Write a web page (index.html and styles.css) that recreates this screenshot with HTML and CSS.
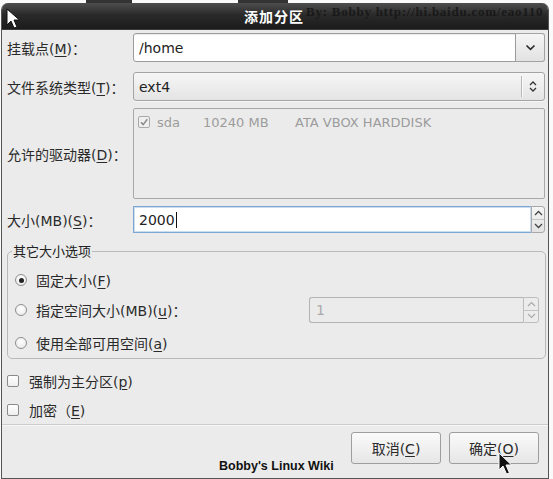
FILE: index.html
```html
<!DOCTYPE html>
<html lang="zh-CN">
<head>
<meta charset="utf-8">
<title>添加分区</title>
<link rel="stylesheet" href="styles.css">
</head>
<body>
<div class="strip"><span class="blot b1"></span><span class="blot b2"></span></div>
<div class="dialog">
  <div class="titlebar">
    <span class="title">添加分区</span>
  </div>
  <div class="content">
    <div class="row r1">
      <span class="lbl">挂载点(<u>M</u>)：</span>
      <div class="field combo-entry">
        <span class="entry">/home</span>
        <span class="drop-btn"><svg width="11" height="7" viewBox="0 0 11 7"><path d="M1.5 1.5 L5.5 5.3 L9.5 1.5" stroke="#2b2b2b" stroke-width="1.7" fill="none"/></svg></span>
      </div>
    </div>
    <div class="row r2">
      <span class="lbl">文件系统类型(<u>T</u>)：</span>
      <div class="field combo-btn">
        <span class="combo-text">ext4</span>
        <span class="vsep"></span>
        <span class="updown"><svg width="8" height="13" viewBox="0 0 8 13"><path d="M1 5 L4 2 L7 5 M1 8 L4 11 L7 8" stroke="#333" stroke-width="1.3" fill="none"/></svg></span>
      </div>
    </div>
    <div class="row r3">
      <span class="lbl">允许的驱动器(<u>D</u>)：</span>
      <div class="field drives">
        <div class="drive">
          <span class="cb checked"><svg width="10" height="10" viewBox="0 0 10 10"><path d="M2 5.2 L4.2 7.6 L8.3 2.2" stroke="#8a8a8a" stroke-width="1.5" fill="none"/></svg></span>
          <span class="d-name">sda</span>
          <span class="d-size">10240 MB</span>
          <span class="d-model">ATA VBOX HARDDISK</span>
        </div>
      </div>
    </div>
    <div class="row r4">
      <span class="lbl">大小(MB)(<u>S</u>)：</span>
      <div class="field spin">
        <span class="spin-entry">2000<span class="caret"></span></span>
        <span class="spin-btns">
          <span class="sb"><svg width="9" height="6" viewBox="0 0 9 6"><path d="M1 5 L4.5 1.5 L8 5" stroke="#444" stroke-width="1.3" fill="none"/></svg></span>
          <span class="sb"><svg width="9" height="6" viewBox="0 0 9 6"><path d="M1 1 L4.5 4.5 L8 1" stroke="#444" stroke-width="1.3" fill="none"/></svg></span>
        </span>
      </div>
    </div>

    <fieldset class="group">
      <legend>其它大小选项</legend>
      <div class="opts">
        <div class="opt">
          <span class="radio on"><span class="dot"></span></span>
          <span class="opt-lbl">固定大小(<u>F</u>)</span>
        </div>
        <div class="opt">
          <span class="radio"></span>
          <span class="opt-lbl">指定空间大小(MB)(<u>u</u>)：</span>
          <div class="spin disabled">
            <span class="spin-entry">1</span>
            <span class="spin-btns">
              <span class="sb"><svg width="9" height="6" viewBox="0 0 9 6"><path d="M1 5 L4.5 1.5 L8 5" stroke="#aaa" stroke-width="1.2" fill="none"/></svg></span>
              <span class="sb"><svg width="9" height="6" viewBox="0 0 9 6"><path d="M1 1 L4.5 4.5 L8 1" stroke="#aaa" stroke-width="1.2" fill="none"/></svg></span>
            </span>
          </div>
        </div>
        <div class="opt last">
          <span class="radio"></span>
          <span class="opt-lbl">使用全部可用空间(<u>a</u>)</span>
        </div>
      </div>
    </fieldset>

    <div class="checks">
      <div class="chk"><span class="cb"></span><span class="chk-lbl">强制为主分区(<u>p</u>)</span></div>
      <div class="chk"><span class="cb"></span><span class="chk-lbl">加密（<u>E</u>)</span></div>
    </div>
    <div class="sep"></div>
    <div class="buttons">
      <button class="btn">取消(<u>C</u>)</button>
      <button class="btn">确定(<u>O</u>)</button>
    </div>
  </div>

  <span class="wm-top">By: Bobby http://hi.baidu.com/eao110</span>
  <span class="wm-bottom">Bobby's Linux Wiki</span>
  <svg class="cursor c1" width="16" height="22" viewBox="0 0 16 22"><path d="M1 1 L1 17 L5 13 L8 20 L11 19 L8 12 L13.5 12 Z" fill="#fff" stroke="#111" stroke-width="1"/></svg>
  <svg class="cursor c2" width="16" height="24" viewBox="0 0 16 24"><path d="M1 1 L1 18 L5 14 L8.5 22 L11.5 21 L8 13 L13.5 13 Z" fill="#111" stroke="#fff" stroke-width="1"/></svg>
</div>
</body>
</html>
```
FILE: styles.css
```css
* { box-sizing: border-box; }
html, body { margin: 0; padding: 0; }
body {
  width: 553px;
  height: 479px;
  overflow: hidden;
  background: #fafafa;
  font-family: "DejaVu Sans", "Noto Sans CJK SC", sans-serif;
  font-size: 14px;
  color: #2a2a2a;
}
u { text-decoration: underline; text-underline-offset: 2px; }

.strip { height: 3px; display: flex; }
.blot { height: 3px; background: #333; }
.b1 { width: 46px; margin-left: 86px; }
.b2 { width: 50px; margin-left: 106px; }

.dialog {
  position: relative;
  width: 548px;
  height: 476px;
  margin-left: 1px;
  background: #ebebeb;
  border: 1px solid #555;
  border-top: none;
  border-radius: 7px 7px 0 0;
  overflow: hidden;
}

.titlebar {
  height: 27px;
  background: linear-gradient(#4e4e4e, #2a2a2a 45%, #1b1b1b);
  display: flex;
  align-items: center;
  justify-content: center;
  padding-left: 4px;
  border-bottom: 1px solid #3a3a3a;
}
.title {
  color: #fff;
  font-family: "Noto Sans CJK SC", sans-serif;
  font-weight: 700;
  font-size: 14px;
  letter-spacing: 1px;
  margin-left: -6px;
}

.content { padding: 3px 3px 0 4px; display: flex; flex-direction: column; }

.row { display: flex; align-items: center; }
.r1 { height: 29px; }
.r2 { height: 29px; margin-top: 10px; }
.r3 { height: 91px; margin-top: 7px; }
.r4 { height: 27px; margin-top: 7px; }

.lbl {
  width: 127px;
  flex: none;
  padding-left: 1px;
  white-space: nowrap;
  color: #2a2a2a;
}
.field { flex: 1; height: 100%; }

.combo-entry { display: flex; }
.entry {
  flex: 1;
  background: #fff;
  border: 1px solid #9c9c9c;
  border-radius: 3px 0 0 3px;
  padding-left: 5px;
  display: flex;
  align-items: center;
  font-size: 14px;
  color: #222;
  box-shadow: inset 0 1px 1px rgba(0,0,0,0.08);
}
.drop-btn {
  width: 30px;
  background: linear-gradient(#f5f5f5, #e2e2e2);
  border: 1px solid #a2a2a2;
  border-left: 1px solid #9c9c9c;
  border-radius: 0 3px 3px 0;
  display: flex;
  align-items: center;
  justify-content: center;
  margin-left: -1px;
}

.combo-btn {
  display: flex;
  align-items: center;
  background: linear-gradient(#f6f6f6, #e4e4e4);
  border: 1px solid #a4a4a4;
  border-radius: 3px;
  box-shadow: 0 1px 0 rgba(255,255,255,0.6);
}
.combo-text { flex: 1; padding-left: 5px; font-size: 14px; color: #222; }
.vsep { width: 1px; height: 21px; background: #b8b8b8; box-shadow: 1px 0 0 #fafafa; }
.updown { width: 22px; display: flex; justify-content: center; }

.drives {
  background: #ebebeb;
  border: 1px solid #a8a8a8;
  border-radius: 2px;
  padding: 6px 0 0 4px;
}
.drive { display: flex; align-items: center; color: #9c9c9c; height: 14px; font-size: 13px; }
.cb {
  width: 12px;
  height: 12px;
  flex: none;
  border: 1px solid #8f8f8f;
  border-radius: 2px;
  background: linear-gradient(#fff, #eee);
  display: inline-flex;
  align-items: center;
  justify-content: center;
}
.cb.checked { border-color: #a9a9a9; background: #efefef; }
.d-name { width: 46px; margin-left: 7px; }
.d-size { width: 92px; }

.spin { display: flex; }
.spin-entry {
  flex: 1;
  background: #fff;
  border: 1px solid #7ea6d2;
  border-right: none;
  padding-left: 5px;
  display: flex;
  align-items: center;
  font-size: 14px;
  color: #222;
  box-shadow: inset 0 0 0 1px #c9dcf0;
}
.caret { width: 1px; height: 16px; background: #111; margin-left: 1px; }
.spin-btns {
  width: 14px;
  display: flex;
  flex-direction: column;
  border: 1px solid #a8a8a8;
  border-radius: 0 3px 3px 0;
  background: linear-gradient(#f5f5f5, #e3e3e3);
}
.sb { flex: 1; display: flex; align-items: center; justify-content: center; }
.sb + .sb { border-top: 1px solid #c4c4c4; }

.group {
  margin: 11px -1px 0 1px;
  padding: 0 0 0 4px;
  border: 1px solid #b9b9b9;
  border-radius: 5px;
  min-width: 0;
}
.group legend {
  padding: 0 1px;
  font-family: "Noto Sans CJK SC", sans-serif;
  font-size: 13px;
  line-height: 14px;
  color: #222;
}
.opts { padding-top: 7px; }
.opt { display: flex; align-items: center; height: 30px; }
.opt.last { margin-top: 3px; }
.radio {
  width: 12px;
  height: 12px;
  margin-left: 3px;
  border: 1px solid #8e8e8e;
  border-radius: 50%;
  background: radial-gradient(circle at 50% 35%, #fff, #e6e6e6);
  display: flex;
  align-items: center;
  justify-content: center;
  flex: none;
}
.dot { width: 5px; height: 5px; border-radius: 50%; background: #222; }
.opt-lbl { margin-left: 9px; flex: 1; color: #2a2a2a; white-space: nowrap; }
.spin.disabled { width: 230px; height: 26px; margin-right: 6px; flex: none; }
.spin.disabled .spin-entry {
  background: #ebebeb;
  border: 1px solid #b3b3b3;
  border-right: none;
  border-radius: 3px 0 0 3px;
  box-shadow: none;
  color: #aaa;
  padding-left: 6px;
}
.spin.disabled .spin-btns { width: 16px; border-color: #bdbdbd; background: #ececec; }

.checks { margin-top: 7px; }
.chk { display: flex; align-items: center; height: 29px; padding-left: 1px; }
.chk .cb { border-color: #8a8a8a; }
.chk-lbl { margin-left: 10px; color: #2a2a2a; }

.sep { height: 1px; background: #cdcdcd; border-bottom: 1px solid #f7f7f7; margin: 0 -3px 0 -4px; box-sizing: content-box; }

.buttons { display: flex; justify-content: flex-end; gap: 8px; margin-top: 6px; padding-right: 6px; }
.btn {
  width: 90px;
  height: 32px;
  font-family: "DejaVu Sans", "Noto Sans CJK SC", sans-serif;
  font-size: 14px;
  color: #2a2a2a;
  background: linear-gradient(#fafafa, #e6e6e6);
  border: 1px solid #9e9e9e;
  border-radius: 3px;
  padding: 0;
}

.wm-top {
  position: absolute;
  left: 304px;
  top: 1px;
  white-space: nowrap;
  font-family: "Liberation Serif", serif;
  font-weight: 700;
  font-size: 13px;
  letter-spacing: 0.75px;
  color: #161616;
  opacity: 0.85;
}
.wm-bottom {
  position: absolute;
  left: 217px;
  top: 456px;
  white-space: nowrap;
  font-family: "Liberation Sans", sans-serif;
  font-weight: 700;
  font-size: 12.5px;
  color: #111;
}
.cursor { position: absolute; }
.c1 { left: 4px; top: 5px; }
.c2 { left: 496px; top: 449px; }
```
